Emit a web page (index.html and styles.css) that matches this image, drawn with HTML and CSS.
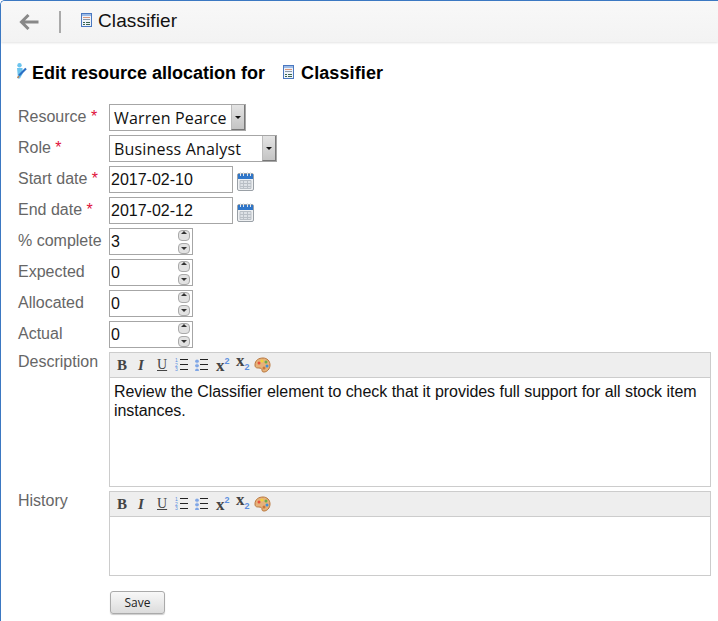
FILE: index.html
```html
<!DOCTYPE html>
<html>
<head>
    <title>Edit resource allocation</title>
    <link rel="stylesheet" href="styles.css">
</head>
<body>
    <svg class="defs" width="0" height="0">
        <symbol id="classifier" viewBox="0 0 11 14">
            <rect x="0.5" y="0.5" width="10" height="13" fill="#eef3fa" stroke="#4a78c0"/>
            <rect x="1" y="1" width="9" height="2" fill="#9dbbe6"/>
            <path d="M2 4.500h7" stroke="#d9967a"/>
            <path d="M2 6.500h7" stroke="#8a98a8"/>
            <path d="M2 9.500h2M5 9.500h4M2 11.500h2M5 11.500h4" stroke="#3a6650"/>
        </symbol>
        <symbol id="calendar" viewBox="0 0 17 20">
            <rect x="0.500" y="2.500" width="16" height="17" rx="1.500" fill="#eef0f2" stroke="#9aa0a6"/>
            <path d="M1 3h15v5H1z" fill="#2f76c9"/>
            <path d="M3.500 1v4M6.500 1v4M10.500 1v4M13.500 1v4" stroke="#dfe6ee" stroke-width="1"/>
            <path d="M3 9.500h11v8H3z" fill="#dde1e6" stroke="#b9bfc6" stroke-width="1"/>
            <path d="M6.500 9v9M10.500 9v9M3 12.500h11M3 15.500h11" stroke="#b9bfc6"/>
        </symbol>
        <symbol id="palette" viewBox="0 0 17 16">
            <path d="M1 8C1 3 5 1 9 1c4 0 7 3 7 7 0 4-3 7-6 7-2 0-2-1-2-2s-1-2-3-2-4 0-4-3z" fill="#e6b27a" stroke="#b9763c"/>
            <circle cx="5" cy="6" r="1.500" fill="#e8503a"/>
            <circle cx="8" cy="4" r="1.500" fill="#f2d03b"/>
            <circle cx="12" cy="5" r="1.500" fill="#6cb04a"/>
            <circle cx="13" cy="9" r="1.500" fill="#3f8fd8"/>
            <circle cx="10" cy="11" r="1.500" fill="#c9763a"/>
        </symbol>
    </svg>

    <div class="topbar">
        <svg class="back" width="20" height="16" viewBox="0 0 20 16"><path d="M19.500 8H3M9.500 1 2.500 8 9.500 15" fill="none" stroke="#888" stroke-width="3"/></svg>
        <span class="sep"></span>
        <svg class="icon-c" width="11" height="14"><use href="#classifier"/></svg>
        <span class="topbar-title">Classifier</span>
    </div>

    <div class="content">
        <h1 class="page-title">
            <svg class="person" width="11" height="16" viewBox="0 0 11 16">
                <circle cx="3.500" cy="2.200" r="2.200" fill="#6cc4ee"/>
                <path d="M1 5h5.500v6L4 15.500H2z" fill="#6cc4ee"/>
                <path d="M3 12.500 10 5.500" stroke="#2b6fc4" stroke-width="2.200"/>
                <path d="M1.500 15l1.500-2" stroke="#b9825a" stroke-width="1.500"/>
            </svg>
            <span>Edit resource allocation for</span>
            <svg class="icon-c" width="11" height="14"><use href="#classifier"/></svg>
            <span class="title-name">Classifier</span>
        </h1>

        <form class="form">
            <div class="row">
                <label class="lbl">Resource <b>*</b></label>
                <div class="sel sel-resource"><span>Warren Pearce</span><i class="drop"></i></div>
            </div>
            <div class="row">
                <label class="lbl">Role <b>*</b></label>
                <div class="sel sel-role"><span>Business Analyst</span><i class="drop"></i></div>
            </div>
            <div class="row">
                <label class="lbl">Start date <b>*</b></label>
                <input class="inp date" value="2017-02-10">
                <svg class="cal" width="17" height="20"><use href="#calendar"/></svg>
            </div>
            <div class="row">
                <label class="lbl">End date <b>*</b></label>
                <input class="inp date" value="2017-02-12">
                <svg class="cal" width="17" height="20"><use href="#calendar"/></svg>
            </div>
            <div class="row">
                <label class="lbl">% complete</label>
                <div class="num"><input class="inp" value="3"><span class="spin"><i class="up"></i><i class="down"></i></span></div>
            </div>
            <div class="row">
                <label class="lbl">Expected</label>
                <div class="num"><input class="inp" value="0"><span class="spin"><i class="up"></i><i class="down"></i></span></div>
            </div>
            <div class="row">
                <label class="lbl">Allocated</label>
                <div class="num"><input class="inp" value="0"><span class="spin"><i class="up"></i><i class="down"></i></span></div>
            </div>
            <div class="row">
                <label class="lbl">Actual</label>
                <div class="num"><input class="inp" value="0"><span class="spin"><i class="up"></i><i class="down"></i></span></div>
            </div>

            <div class="row row-editor">
                <label class="lbl">Description</label>
                <div class="editor">
                    <div class="toolbar">
                        <span class="tb tb-b">B</span>
                        <span class="tb tb-i">I</span>
                        <span class="tb tb-u">U</span>
                        <span class="tb-list"><span class="nums">1<br>2<br>3</span><i></i></span>
                        <span class="tb-list"><span class="dots"></span><i></i></span>
                        <span class="tb tb-x tb-sup">x<sup>2</sup></span>
                        <span class="tb tb-x tb-sub">x<sub>2</sub></span>
                        <svg width="17" height="16"><use href="#palette"/></svg>
                    </div>
                    <div class="editor-body body-desc">Review the Classifier element to check that it provides full support for all stock item instances.</div>
                </div>
            </div>

            <div class="row row-editor row-history">
                <label class="lbl">History</label>
                <div class="editor">
                    <div class="toolbar">
                        <span class="tb tb-b">B</span>
                        <span class="tb tb-i">I</span>
                        <span class="tb tb-u">U</span>
                        <span class="tb-list"><span class="nums">1<br>2<br>3</span><i></i></span>
                        <span class="tb-list"><span class="dots"></span><i></i></span>
                        <span class="tb tb-x tb-sup">x<sup>2</sup></span>
                        <span class="tb tb-x tb-sub">x<sub>2</sub></span>
                        <svg width="17" height="16"><use href="#palette"/></svg>
                    </div>
                    <div class="editor-body body-hist"></div>
                </div>
            </div>

            <div class="actions">
                <button type="button" class="save">Save</button>
            </div>
        </form>
    </div>
</body>
</html>
```

FILE: styles.css
```css
html, body {
    margin: 0;
    height: 621px;
    overflow: hidden;
}
body {
    font-family: "Liberation Sans", sans-serif;
    font-size: 16px;
    color: #000;
    background: #fff;
    border-top: 1px solid #3b78c2;
    border-left: 1px solid #3b78c2;
    border-top-left-radius: 5px;
    box-sizing: border-box;
}
.defs {
    position: absolute;
}

/* top bar */
.topbar {
    display: flex;
    align-items: center;
    height: 41px;
    background: linear-gradient(#f8f8f8, #f3f3f3);
    box-shadow: 0 1px 2px #e4e4e4;
}
.back {
    margin-left: 18px;
}
.sep {
    width: 2px;
    height: 22px;
    background: #aaa;
    margin: 0 20px 0 20px;
}
.topbar-title {
    font-size: 19px;
    letter-spacing: 0.1px;
    margin-left: 6px;
    padding-bottom: 2px;
    color: #111;
}
.topbar .icon-c {
    margin-top: -3px;
}

/* heading */
.content {
    padding: 0 7px 0 15px;
}
.page-title {
    display: flex;
    align-items: center;
    font-size: 18px;
    font-weight: bold;
    margin: 0;
    height: 62px;
    box-sizing: border-box;
}
.person {
    margin-right: 5px;
    position: relative;
    top: -2px;
}
.page-title .icon-c {
    margin: 0 7px 0 18px;
    position: relative;
    top: -1px;
}
.title-name {
    letter-spacing: 0.1px;
}

/* form rows */
.form {
    padding-left: 2px;
}
.row {
    display: flex;
    align-items: flex-start;
    height: 31px;
}
.lbl {
    width: 91px;
    flex: none;
    color: #666;
    line-height: 26px;
    white-space: nowrap;
}
.lbl b {
    color: #e0103a;
    font-weight: normal;
}
.inp {
    height: 27px;
    box-sizing: border-box;
    border: 1px solid #a6a6a6;
    padding: 1px 1px 0;
    margin: 0;
    width: 100%;
    font-family: "Liberation Sans", sans-serif;
    font-size: 16px;
    color: #111;
    background: #fff;
    outline: none;
}
.inp.date {
    width: 124px;
}
.cal {
    margin: 5px 0 0 4px;
}

/* fake select boxes */
.sel {
    display: flex;
    align-items: center;
    justify-content: space-between;
    height: 27px;
    box-sizing: border-box;
    border: 1px solid #a6a6a6;
    font-family: "Open Sans", sans-serif;
    font-size: 16px;
    letter-spacing: 0.18px;
    color: #111;
    padding-left: 4px;
}
.sel-resource {
    width: 137px;
}
.sel-role {
    width: 168px;
}
.drop {
    position: relative;
    width: 14px;
    height: 25px;
    background: linear-gradient(#e4e4e4, #c4c4c4);
    border-left: 1px solid #bbb;
    border-right: 1px solid #777;
    border-bottom: 1px solid #777;
    box-sizing: border-box;
}
.drop::after {
    content: "";
    position: absolute;
    left: 3px;
    top: 11px;
    border: 3px solid transparent;
    border-top: 3px solid #111;
    border-bottom: 0;
}

/* number inputs */
.num {
    position: relative;
    width: 84px;
}
.spin {
    position: absolute;
    right: 3px;
    top: 2px;
    display: flex;
    flex-direction: column;
    gap: 2px;
}
.spin i {
    position: relative;
    display: block;
    width: 10px;
    height: 9px;
    border: 1px solid #aaa;
    border-radius: 4px;
    background: #e2e2e2;
}
.spin i::after {
    content: "";
    position: absolute;
    left: 2px;
    border: 3px solid transparent;
}
.spin .up::after {
    top: 0;
    border-top: 0;
    border-bottom: 3px solid #333;
}
.spin .down::after {
    top: 3px;
    border-bottom: 0;
    border-top: 3px solid #333;
}

/* editors */
.row-editor {
    height: auto;
}
.row-editor .lbl {
    margin-top: -3px;
}
.row-history {
    margin-top: 4px;
}
.editor {
    width: 603px;
    box-sizing: border-box;
    border: 1px solid #ccc;
}
.toolbar {
    display: flex;
    align-items: center;
    height: 24px;
    background: #eee;
    border-bottom: 1px solid #ccc;
    padding-left: 7px;
    font-family: "Liberation Serif", serif;
}
.tb {
    color: #444;
    font-size: 14px;
    font-weight: bold;
}
.tb-b {
    width: 21px;
    font-size: 15px;
}
.tb-i {
    width: 19px;
    font-style: italic;
    font-size: 15px;
}
.tb-u {
    width: 18px;
    font-weight: normal;
    text-decoration: underline;
    font-size: 14px;
}
.tb-list {
    display: flex;
    align-items: center;
    width: 20px;
    gap: 1px;
}
.tb-list i {
    width: 8px;
    height: 12px;
    background:
        linear-gradient(#222, #222) 0 0 / 100% 1px no-repeat,
        linear-gradient(#222, #222) 0 5px / 100% 1px no-repeat,
        linear-gradient(#222, #222) 0 10px / 100% 1px no-repeat;
}
.nums {
    font: 5px/4.500px "Liberation Sans", sans-serif;
    color: #5b8fe0;
    width: 4px;
}
.dots {
    width: 4px;
    height: 12px;
    background: radial-gradient(circle, #7fa6e6 1.500px, transparent 2px) 0 0 / 4px 4.500px repeat-y;
}
.tb-x {
    width: 20px;
    font-size: 17px;
    line-height: 16px;
}
.tb-sup {
    margin-left: 1px;
}
.tb-x sup, .tb-x sub {
    font: bold 9px/9px "Liberation Sans", sans-serif;
    color: #5b8fe0;
}
.tb-sub {
    position: relative;
    top: -2px;
    width: 18px;
}
.editor-body {
    padding: 4px;
    line-height: 19px;
    letter-spacing: -0.04px;
    box-sizing: border-box;
    color: #111;
}
.body-desc {
    height: 108px;
}
.body-hist {
    height: 58px;
}

.actions {
    padding: 15px 0 0 92px;
}
.save {
    width: 55px;
    height: 23px;
    border: 1px solid #aaa;
    border-radius: 3px;
    background: linear-gradient(#f8f8f8, #dcdcdc);
    box-shadow: 0 1px 1px #ccc;
    font-family: "Open Sans", sans-serif;
    font-size: 12px;
    color: #222;
    padding: 0;
}
```
